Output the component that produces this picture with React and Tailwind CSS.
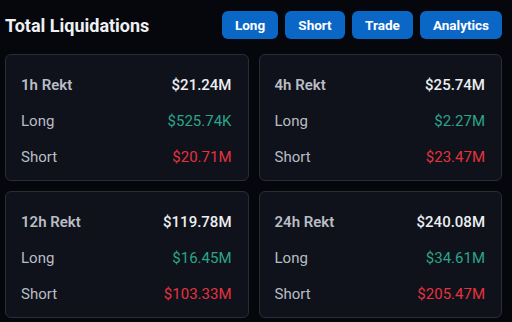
import React from "react";

const cards = [
  { t: "1h Rekt", total: "$21.24M", long: "$525.74K", short: "$20.71M" },
  { t: "4h Rekt", total: "$25.74M", long: "$2.27M", short: "$23.47M" },
  { t: "12h Rekt", total: "$119.78M", long: "$16.45M", short: "$103.33M" },
  { t: "24h Rekt", total: "$240.08M", long: "$34.61M", short: "$205.47M" },
];

function Card({ c }) {
  return (
    <div className="h-[127px] rounded-md border border-[#2a2d35] bg-[#0f121a] pl-[15px] pr-[16px] pt-[12px] flex flex-col">
      <div className="h-[36px] flex items-center justify-between">
        <span className="text-[15px] font-semibold text-[#b9bdc5]">{c.t}</span>
        <span className="text-[15px] font-medium text-[#eceef1]">{c.total}</span>
      </div>
      <div className="h-[36px] flex items-center justify-between">
        <span className="text-[15px] text-[#b9bdc5]">Long</span>
        <span className="text-[15px] text-[#2aa58a]">{c.long}</span>
      </div>
      <div className="h-[36px] flex items-center justify-between">
        <span className="text-[15px] text-[#b9bdc5]">Short</span>
        <span className="text-[15px] text-[#e5323f]">{c.short}</span>
      </div>
    </div>
  );
}

export default function App() {
  return (
    <div
      className="w-[512px] h-[322px] bg-[#05070c] pl-[5px] pr-[10px] overflow-hidden"
      style={{ fontFamily: "Roboto, 'Noto Sans', sans-serif" }}
    >
      <div className="h-[54px] flex items-start justify-between">
        <h1 className="mt-[13px] text-[18px] font-bold text-[#eef0f3] leading-[26px]">Total Liquidations</h1>
        <div className="mt-[11px] flex gap-[7px]">
          {[
            ["Long", "w-[56px]"],
            ["Short", "w-[60px]"],
            ["Trade", "w-[61px]"],
            ["Analytics", "w-[82px]"],
          ].map(([b, w]) => (
            <button
              key={b}
              className={`${w} h-[28px] rounded-md bg-[#0b67c6] text-white text-[13.5px] font-bold`}
            >
              {b}
            </button>
          ))}
        </div>
      </div>
      <div className="grid grid-cols-2 gap-x-[10px] gap-y-[10px]">
        {cards.map((c) => (
          <Card key={c.t} c={c} />
        ))}
      </div>
    </div>
  );
}
